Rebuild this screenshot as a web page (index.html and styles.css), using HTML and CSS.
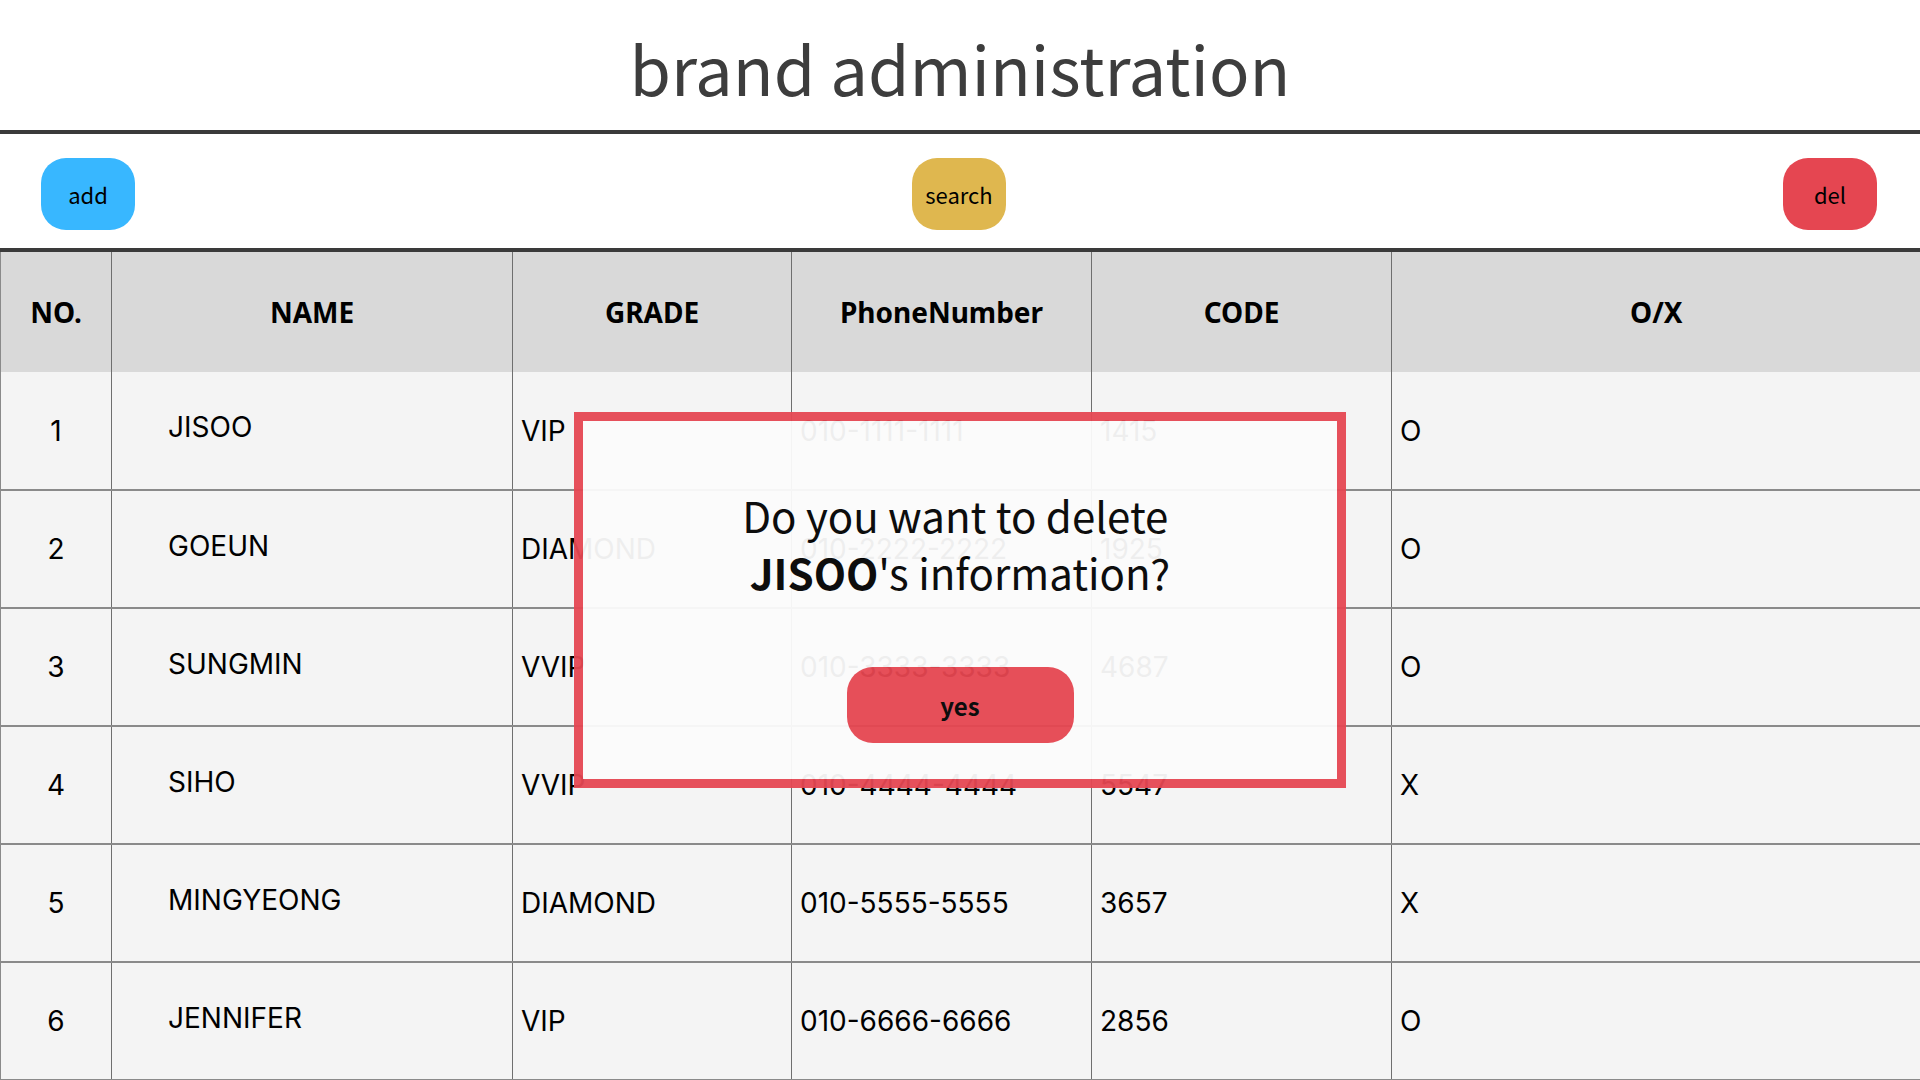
FILE: index.html
```html
<!DOCTYPE html>
<html lang="en">
<head>
<meta charset="utf-8">
<title>brand administration</title>
<link rel="stylesheet" href="styles.css">
</head>
<body>
<header class="top">
  <h1 class="title">brand administration</h1>
</header>
<div class="rule"></div>
<div class="toolbar">
  <button class="btn btn-add">add</button>
  <button class="btn btn-search">search</button>
  <button class="btn btn-del">del</button>
</div>
<div class="rule"></div>
<table class="grid">
  <colgroup>
    <col class="c-no"><col class="c-name"><col class="c-grade"><col class="c-phone"><col class="c-code"><col class="c-ox">
  </colgroup>
  <thead>
    <tr><th>NO.</th><th>NAME</th><th>GRADE</th><th>PhoneNumber</th><th>CODE</th><th>O/X</th></tr>
  </thead>
  <tbody>
    <tr><td class="no">1</td><td class="name">JISOO</td><td>VIP</td><td>010-1111-1111</td><td>1415</td><td>O</td></tr>
    <tr><td class="no">2</td><td class="name">GOEUN</td><td>DIAMOND</td><td>010-2222-2222</td><td>1925</td><td>O</td></tr>
    <tr><td class="no">3</td><td class="name">SUNGMIN</td><td>VVIP</td><td>010-3333-3333</td><td>4687</td><td>O</td></tr>
    <tr><td class="no">4</td><td class="name">SIHO</td><td>VVIP</td><td>010-4444-4444</td><td>5547</td><td>X</td></tr>
    <tr><td class="no">5</td><td class="name">MINGYEONG</td><td>DIAMOND</td><td>010-5555-5555</td><td>3657</td><td>X</td></tr>
    <tr><td class="no">6</td><td class="name">JENNIFER</td><td>VIP</td><td>010-6666-6666</td><td>2856</td><td>O</td></tr>
  </tbody>
</table>
<div class="dialog">
  <p class="msg">Do you want to delete&nbsp;<br><b>JISOO</b>'s information?</p>
  <button class="yes">yes</button>
</div>
</body>
</html>
```
FILE: styles.css
```css
html, body {
  margin: 0;
  padding: 0;
  background: #ffffff;
  overflow: hidden;
}
body {
  font-family: "Inter", "Noto Sans", sans-serif;
  color: #000;
}
.top {
  box-sizing: border-box;
  height: 130px;
  padding-top: 3px;
  display: flex;
  justify-content: center;
}
.title {
  margin: 0;
  font-family: "Noto Sans CJK KR", "Noto Sans", sans-serif;
  font-weight: 400;
  font-size: 67px;
  line-height: 127px;
  color: #3d3d3d;
}
.rule {
  height: 4px;
  background: #3a3a3a;
}
.toolbar {
  display: flex;
  justify-content: space-between;
  align-items: flex-start;
  padding: 24px 43px 18px 41px;
}
.btn {
  width: 94px;
  height: 72px;
  border: none;
  border-radius: 25px;
  padding: 0;
  font-family: "Noto Sans CJK KR", "Noto Sans", sans-serif;
  font-size: 22px;
  color: #000;
}
.btn-add { background: #38b7ff; }
.btn-search { background: #dfb74f; }
.btn-del { background: #e54651; }

.grid {
  width: 1920px;
  table-layout: fixed;
  border-collapse: collapse;
  border-left: 1px solid #8a8a8a;
}
.c-no { width: 111px; }
.c-name { width: 401px; }
.c-grade { width: 279px; }
.c-phone { width: 300px; }
.c-code { width: 300px; }
.c-ox { width: 529px; }
.grid th {
  height: 120px;
  padding: 0;
  background: #d9d9d9;
  font-family: "Noto Sans", "Inter", sans-serif;
  font-weight: 700;
  font-size: 28px;
  text-align: center;
  border-right: 1px solid #6f6f6f;
}
.grid td {
  height: 118px;
  padding: 0 8px;
  background: #f4f4f4;
  font-size: 28px;
  text-align: left;
  border-right: 1px solid #6f6f6f;
  border-bottom: 2px solid #8a8a8a;
  box-sizing: border-box;
}
.grid th:last-child, .grid td:last-child { border-right: none; }
.grid td.no { text-align: center; padding: 0; }
.grid td.name { padding: 0 8px 7px 56px; }

.dialog {
  position: fixed;
  top: 412px;
  left: 574px;
  width: 772px;
  height: 376px;
  box-sizing: border-box;
  border: 9px solid #e54753;
  background: #fbfbfb;
  opacity: 0.95;
  display: flex;
  flex-direction: column;
  align-items: center;
  padding-top: 65px;
  font-family: "Noto Sans CJK KR", "Noto Sans", sans-serif;
}
.msg {
  margin: 0;
  font-size: 42px;
  line-height: 57px;
  text-align: center;
  color: #000;
}
.msg b { font-weight: 700; }
.yes {
  margin-top: 67px;
  width: 227px;
  height: 76px;
  border: none;
  border-radius: 26px;
  background: #e54651;
  font-family: "Noto Sans CJK KR", "Noto Sans", sans-serif;
  font-weight: 700;
  font-size: 24px;
  color: #000;
  padding: 0;
}
```
